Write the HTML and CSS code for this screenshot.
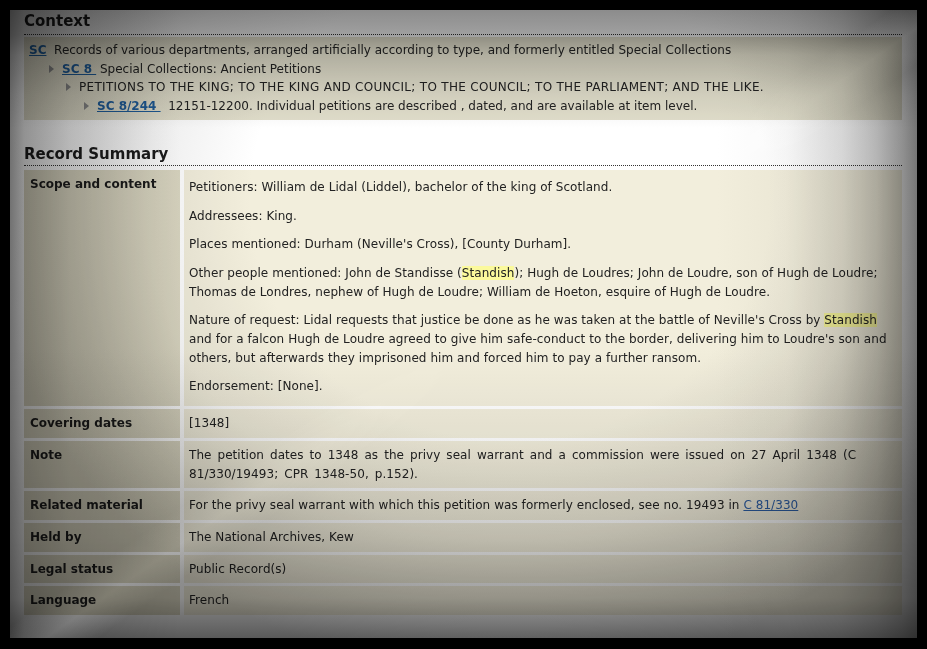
FILE: index.html
```html
<!DOCTYPE html>
<html lang="en">
<head>
<meta charset="utf-8">
<title>SC 8/244/12179</title>
<link rel="stylesheet" href="styles.css">
</head>
<body>
<div class="page">
  <h2 class="section-title context-title">Context</h2>
  <div class="context">
    <div class="crumb lvl1"><a class="ref" href="#">SC</a>&nbsp; Records of various departments, arranged artificially according to type, and formerly entitled Special Collections</div>
    <div class="crumb lvl2"><span class="arrow"></span><a class="ref" href="#">SC 8 </a>&nbsp;Special Collections: Ancient Petitions</div>
    <div class="crumb lvl3 caps"><span class="arrow"></span>PETITIONS TO THE KING; TO THE KING AND COUNCIL; TO THE COUNCIL; TO THE PARLIAMENT; AND THE LIKE.</div>
    <div class="crumb lvl4"><span class="arrow"></span><a class="ref" href="#">SC 8/244 </a>&nbsp;&nbsp;12151-12200. Individual petitions are described , dated, and are available at item level.</div>
  </div>

  <h2 class="section-title summary-title">Record Summary</h2>
  <div class="summary">
    <div class="label">Scope and content</div>
    <div class="value scope">
      <p>Petitioners: William de Lidal (Liddel), bachelor of the king of Scotland.</p>
      <p>Addressees: King.</p>
      <p>Places mentioned: Durham (Neville's Cross), [County Durham].</p>
      <p>Other people mentioned: John de Standisse (<span class="hl">Standish</span>); Hugh de Loudres; John de Loudre, son of Hugh de Loudre; Thomas de Londres, nephew of Hugh de Loudre; William de Hoeton, esquire of Hugh de Loudre.</p>
      <p>Nature of request: Lidal requests that justice be done as he was taken at the battle of Neville's Cross by <span class="hl">Standish</span> and for a falcon Hugh de Loudre agreed to give him safe-conduct to the border, delivering him to Loudre's son and others, but afterwards they imprisoned him and forced him to pay a further ransom.</p>
      <p>Endorsement: [None].</p>
    </div>

    <div class="label">Covering dates</div>
    <div class="value">[1348]</div>

    <div class="label">Note</div>
    <div class="value note">The petition dates to 1348 as the privy seal warrant and a commission were issued on 27 April 1348 (C 81/330/19493; CPR 1348-50, p.152).</div>

    <div class="label">Related material</div>
    <div class="value">For the privy seal warrant with which this petition was formerly enclosed, see no. 19493 in <a class="plain" href="#">C 81/330</a></div>

    <div class="label">Held by</div>
    <div class="value">The National Archives, Kew</div>

    <div class="label">Legal status</div>
    <div class="value">Public Record(s)</div>

    <div class="label">Language</div>
    <div class="value">French</div>
  </div>

  <div class="vignette" aria-hidden="true"></div>
</div>
</body>
</html>
```
FILE: styles.css
```css
html, body {
  margin: 0;
  padding: 0;
  background: #000;
}

body {
  padding: 10px;
  font-family: "DejaVu Sans", Verdana, sans-serif;
  font-size: 12px;
  line-height: 18.7px;
  color: #222;
}

.page {
  position: relative;
  box-sizing: border-box;
  width: 907px;
  height: 628px;
  padding: 1px 15px 0 14px;
  background: #fff;
  overflow: hidden;
}

.section-title {
  margin: 0;
  font-size: 15px;
  line-height: 20px;
  font-weight: bold;
  color: #1c1c1c;
  border-bottom: 1px dotted #333;
}

.context-title {
  padding-bottom: 3px;
}

.summary-title {
  margin-top: 24px;
  padding-bottom: 1px;
}

.context {
  margin-top: 2px;
  padding: 4px 5px;
  background: #e2dfcc;
}

.crumb {
  white-space: nowrap;
}

.caps {
  letter-spacing: 0.3px;
}

.lvl2 { padding-left: 20px; }
.lvl3 { padding-left: 37px; }
.lvl4 { padding-left: 55px; }

.arrow {
  display: inline-block;
  width: 0;
  height: 0;
  margin-right: 8px;
  border-left: 5px solid #8a8a8a;
  border-top: 4px solid transparent;
  border-bottom: 4px solid transparent;
  vertical-align: 0;
  letter-spacing: 0;
}

a.ref {
  font-weight: bold;
  color: #1f5d9b;
  text-decoration: underline;
}

a.plain {
  color: #2d5fa6;
  text-decoration: underline;
}

.summary {
  display: grid;
  grid-template-columns: 156px 1fr;
  gap: 3px 4px;
  margin-top: 4px;
}

.label {
  padding: 5px 6px;
  background: #dcd8c3;
  font-weight: bold;
  color: #1c1c1c;
}

.value {
  padding: 5px 6px 5px 5px;
  background: #f2eedc;
  letter-spacing: 0.06px;
}

.note {
  word-spacing: 2.1px;
}

.scope p {
  margin: 0 0 10px;
}

.scope p:first-child {
  margin-top: 3px;
}

.scope p:last-child {
  margin-bottom: 5px;
}

.hl {
  background: #fbf99c;
}

.vignette {
  position: absolute;
  inset: 0;
  pointer-events: none;
  mix-blend-mode: multiply;
  background-image:
    linear-gradient(145deg, transparent 0px, transparent 505px, rgba(255,255,255,0.17) 535px, transparent 565px, transparent 100%),
    linear-gradient(to bottom, #8c8c8c 0px, #a0a0a0 25px, #c8c8c8 45px, #ececec 85px, #fff 118px),
    linear-gradient(to left, #888 0px, #a2a2a2 14px, #c4c4c4 40px, #e2e2e2 75px, #f8f8f8 130px, #fff 200px),
    linear-gradient(to right, #989898 0px, #c0c0c0 14px, #e0e0e0 60px, #fff 170px),
    linear-gradient(to top, #7c7c7c 0px, #949494 14px, #bcbcbc 40px, #d8d8d8 100px, #f0f0f0 200px, #fff 290px),
    radial-gradient(ellipse 520px 480px at 500px 190px, #fff 50%, #ededed 70%, #d2d2d2 85%, #b8b8b8 100%);
  background-blend-mode: screen, multiply, multiply, multiply, multiply, normal;
}
```
